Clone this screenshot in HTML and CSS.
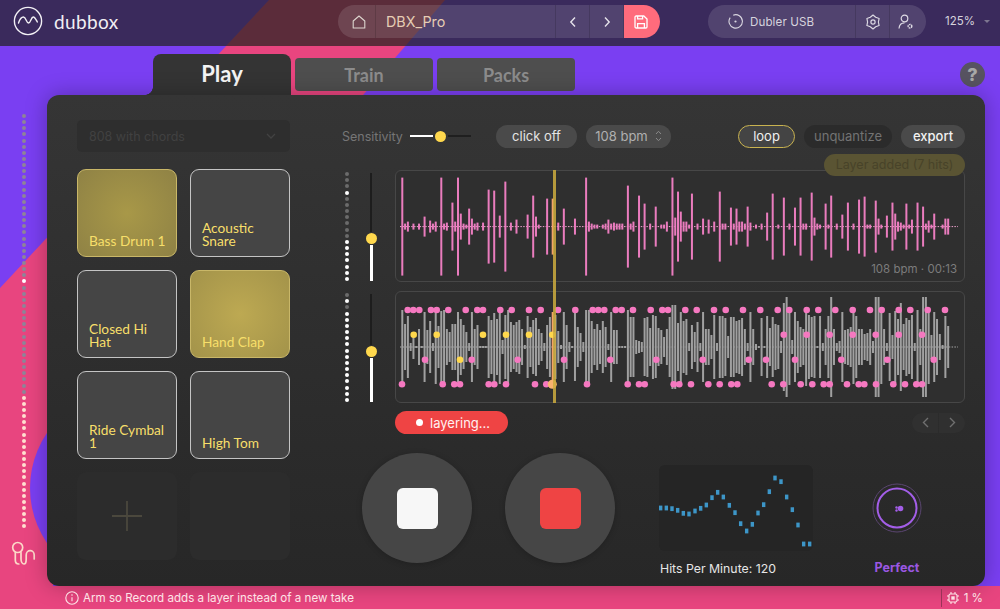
FILE: index.html
```html
<!DOCTYPE html>
<html lang="en">
<head>
    <meta charset="UTF-8">
    <title>dubbox</title>
    <link rel="stylesheet" href="styles.css">
</head>

<body>
    <div class="app">
        <svg class="bg-art" width="1000" height="609" viewBox="0 0 1000 609">
            <polygon points="269,0 445,0 100,400 47,609 0,609 0,288" fill="#e8457f"/>
            <circle cx="127.5" cy="488" r="97.5" fill="#7a3ff2"/>
            <rect x="0" y="586" width="1000" height="23" fill="#e8457f"/>
        </svg>

        <header class="topbar">
            <div class="brand">
                <svg width="30" height="30" viewBox="0 0 30 30" fill="none" stroke="#f2f0f5" stroke-width="1.4">
                    <circle cx="15" cy="15" r="13.6"/>
                    <path d="M5.5 17c1.5-4.5 3.4-6 5-6 2.6 0 2.8 6 5 6 2.4 0 2.4-6 4.8-6 1.6 0 2.6 2.4 4 5" stroke-linecap="round"/>
                </svg>
                <span class="brand-name">dubbox</span>
            </div>

            <div class="pill project">
                <div class="seg seg-home">
                    <svg width="14" height="14" viewBox="0 0 14 14" fill="none" stroke="#ddd6cf" stroke-width="1.1">
                        <path d="M1.2 6L7 1l5.8 5v7H1.2z" stroke-linejoin="round"/>
                    </svg>
                </div>
                <div class="seg seg-title">DBX_Pro</div>
                <div class="seg seg-arrow">
                    <svg width="8" height="12" viewBox="0 0 8 12" fill="none" stroke="#e5e2ea" stroke-width="1.4"><path d="M6 1.5L1.8 6 6 10.5"/></svg>
                </div>
                <div class="seg seg-arrow">
                    <svg width="8" height="12" viewBox="0 0 8 12" fill="none" stroke="#e5e2ea" stroke-width="1.4"><path d="M2 1.5L6.2 6 2 10.5"/></svg>
                </div>
                <div class="seg seg-save">
                    <svg width="14" height="14" viewBox="0 0 14 14" fill="none" stroke="#fff" stroke-width="1.3">
                        <path d="M1 2.2C1 1.5 1.5 1 2.2 1h7.6L13 4v7.8c0 .7-.5 1.2-1.2 1.2H2.2C1.5 13 1 12.5 1 11.8z"/>
                        <path d="M3.6 13V8.6h6.8V13M3.6 1v2.8h5V1"/>
                    </svg>
                </div>
            </div>

            <div class="pill device">
                <div class="seg seg-device">
                    <svg width="15" height="15" viewBox="0 0 15 15" fill="none" stroke="#d9d6e0" stroke-width="1.1">
                        <path d="M2.2 3.6A6.7 6.7 0 1 0 5.2 1.2"/>
                        <circle cx="7.5" cy="7.5" r="1.1" fill="#d9d6e0" stroke="none"/>
                    </svg>
                    <span>Dubler USB</span>
                </div>
                <div class="seg seg-icon">
                    <svg width="16" height="16" viewBox="0 0 16 16" fill="none" stroke="#dcd9e3" stroke-width="1.2" stroke-linejoin="round">
                        <path d="M8 1l2.7 2.3 3.4 1.2-.7 3.500.7 3.500-3.400 1.200L8 15l-2.700-2.300-3.400-1.200.7-3.500-.7-3.500 3.400-1.200z"/>
                        <circle cx="8" cy="8" r="2.1"/>
                    </svg>
                </div>
                <div class="seg seg-icon">
                    <svg width="16" height="16" viewBox="0 0 16 16" fill="none" stroke="#dcd9e3" stroke-width="1.2">
                        <circle cx="6.5" cy="4.5" r="3.3"/>
                        <path d="M1 14.5c.3-3.4 2.400-5.600 5.500-5.600"/>
                        <circle cx="12" cy="12.2" r="1.8" stroke-width="1.5" stroke-dasharray="1.6 .6"/>
                    </svg>
                </div>
            </div>

            <div class="zoom">125%<span class="zoom-caret"></span></div>
        </header>

        <nav class="tabs">
            <div class="tab tab-play">Play</div>
            <div class="tab">Train</div>
            <div class="tab">Packs</div>
            <div class="help">?</div>
        </nav>

        <div class="work">
            <aside class="rail">
                <div class="meter meter-rail" data-count="68" data-on="27" data-warm-from="46"></div>
                <svg class="snake" width="25" height="27" viewBox="0 0 25 27" fill="none" stroke="#fcd9c8" stroke-width="1.7" stroke-linecap="round">
                    <circle cx="6.7" cy="6.5" r="5"/>
                    <path d="M4.3 11.300V19c0 2.500 1.500 4 3.500 4M10 11.500V18c0 3 1.500 5 3 5s2.200-2 2.200-5v-4c0-2.700 2-4.300 4-4.300s4 1.600 4 4.300v4"/>
                </svg>
            </aside>

            <main class="panel">
                <section class="kit">
                    <div class="kit-select">
                        <span>808 with chords</span>
                        <svg width="10" height="6" viewBox="0 0 10 6" fill="none" stroke="#424242" stroke-width="1.3"><path d="M1 1l4 4 4-4"/></svg>
                    </div>
                    <div class="pads">
                        <div class="pad pad-on pad-dim">Bass Drum 1</div>
                        <div class="pad">Acoustic Snare</div>
                        <div class="pad">Closed Hi Hat</div>
                        <div class="pad pad-on">Hand Clap</div>
                        <div class="pad">Ride Cymbal 1</div>
                        <div class="pad">High Tom</div>
                        <div class="pad pad-empty">
                            <svg width="30" height="30" viewBox="0 0 30 30" stroke="#4b483d" stroke-width="1.8"><path d="M15 0v30M0 15h30"/></svg>
                        </div>
                        <div class="pad pad-empty"></div>
                    </div>
                </section>

                <section class="editor">
                    <div class="controls">
                        <span class="sens-label">Sensitivity</span>
                        <div class="hslider">
                            <span class="hslider-on"></span>
                            <span class="knob"></span>
                            <span class="hslider-off"></span>
                        </div>
                        <button class="chip chip-click">click off</button>
                        <button class="chip chip-bpm">108 bpm
                            <svg width="7" height="12" viewBox="0 0 7 12" fill="none" stroke="#8a8a8a" stroke-width="1"><path d="M1 4l2.5-2.700L6 4M1 8l2.500 2.700L6 8"/></svg>
                        </button>
                        <button class="chip chip-loop">loop</button>
                        <button class="chip chip-off">unquantize</button>
                        <button class="chip chip-export">export</button>
                    </div>

                    <div class="tracks">
                        <div class="track">
                            <div class="meter" data-count="18" data-on="3,11,12,13,14,15,16,17"></div>
                            <div class="vslider vslider-a">
                                <span class="vslider-off"></span>
                                <span class="knob"></span>
                                <span class="vslider-on"></span>
                            </div>
                            <div class="wave">
                                <svg id="wavePink" width="570" height="112" viewBox="395 170 570 112"></svg>
                                <span class="wave-info">108 bpm · 00:13</span>
                            </div>
                        </div>
                        <div class="track">
                            <div class="meter" data-count="18" data-on="1,3,4,5,6,7,8,9,10,11,12,13,14,15,16,17"></div>
                            <div class="vslider vslider-b">
                                <span class="vslider-off"></span>
                                <span class="knob"></span>
                                <span class="vslider-on"></span>
                            </div>
                            <div class="wave">
                                <svg id="waveGrey" width="570" height="112" viewBox="395 291 570 112"></svg>
                            </div>
                        </div>
                        <span class="playhead"></span>
                        <div class="toast">Layer added (7 hits)</div>
                    </div>

                    <div class="status-row">
                        <div class="layering"><span class="layering-dot"></span>layering...</div>
                        <div class="pager">
                            <div class="pager-btn">
                                <svg width="7" height="11" viewBox="0 0 7 11" fill="none" stroke="#6f6f6f" stroke-width="1.4"><path d="M6 1L1.500 5.500 6 10"/></svg>
                            </div>
                            <div class="pager-btn">
                                <svg width="7" height="11" viewBox="0 0 7 11" fill="none" stroke="#6f6f6f" stroke-width="1.4"><path d="M1 1l4.500 4.500L1 10"/></svg>
                            </div>
                        </div>
                    </div>

                    <div class="transport">
                        <div class="round-btn"><span class="square square-stop"></span></div>
                        <div class="round-btn"><span class="square square-rec"></span></div>
                        <div class="hits">
                            <svg id="hitsChart" class="hits-chart" width="154" height="86" viewBox="0 0 154 86"></svg>
                            <div class="hits-label">Hits Per Minute: 120</div>
                        </div>
                        <div class="rating">
                            <svg width="50" height="50" viewBox="0 0 50 50" fill="none">
                                <circle cx="25" cy="25" r="24" stroke="#5a4570" stroke-width="1"/>
                                <circle cx="25" cy="25" r="19.5" stroke="#a35ee8" stroke-width="2"/>
                                <circle cx="28.5" cy="25.5" r="2.8" fill="#a35ee8"/>
                                <circle cx="24.5" cy="24.5" r="1.2" fill="#a35ee8"/>
                                <circle cx="24.5" cy="27.5" r="1.2" fill="#a35ee8"/>
                            </svg>
                            <div class="rating-label">Perfect</div>
                        </div>
                    </div>
                </section>
            </main>
        </div>

        <footer class="statusbar">
            <svg width="14" height="14" viewBox="0 0 14 14" fill="none" stroke="#fde3e6" stroke-width="1.1">
                <circle cx="7" cy="7" r="6.2"/>
                <path d="M7 6.2v4"/>
                <circle cx="7" cy="4" r=".8" fill="#fde3e6" stroke="none"/>
            </svg>
            <span class="hint">Arm so Record adds a layer instead of a new take</span>
            <span class="cpu">
                <svg width="12" height="12" viewBox="0 0 12 12" fill="none" stroke="#fde3e6" stroke-width="1.1">
                    <rect x="2" y="2" width="8" height="8" rx="1.5"/>
                    <rect x="4.3" y="4.3" width="3.4" height="3.4" fill="#fde3e6" stroke="none"/>
                    <path d="M4 0v2M8 0v2M4 10v2M8 10v2M0 4h2M0 8h2M10 4h2M10 8h2"/>
                </svg>
                1 %
            </span>
        </footer>
    </div>

    <script src="waves.js"></script>
</body>
</html>
```

FILE: styles.css
```css
* {
    box-sizing: border-box;
}

body {
    margin: 0;
    background-color: #7a3ff2;
    font-family: "Inter", "Liberation Sans", sans-serif;
}

.app {
    position: relative;
    width: 1000px;
    height: 609px;
    overflow: hidden;
    display: flex;
    flex-direction: column;
    background-color: #7a3ff2;
}

.bg-art {
    position: absolute;
    top: 0;
    left: 0;
}

/* top bar */

.topbar {
    position: relative;
    display: flex;
    align-items: flex-start;
    height: 46px;
    padding-top: 5px;
    background-color: rgba(31, 34, 28, 0.7);
}

.brand {
    display: flex;
    align-items: center;
    width: 338px;
    height: 32px;
    padding-left: 13px;
}

.brand-name {
    margin-left: 11px;
    color: #f0eef3;
    font-family: "Lato", sans-serif;
    font-size: 19px;
    letter-spacing: 0.4px;
}

.pill {
    display: flex;
    height: 33px;
    border-radius: 17px;
    overflow: hidden;
}

.seg {
    display: flex;
    align-items: center;
    justify-content: center;
    background-color: rgba(255, 255, 255, 0.12);
    border-right: 1px solid rgba(0, 0, 0, 0.14);
}

.project {
    width: 322px;
}

.seg-home {
    width: 38px;
    padding-left: 4px;
}

.seg-title {
    justify-content: flex-start;
    width: 180px;
    padding-left: 10px;
    color: #e6cdb4;
    font-size: 14.3px;
}

.seg-arrow {
    width: 34px;
}

.seg-save {
    width: 36px;
    padding-right: 2px;
    background-color: #ff6b7c;
    border-right: none;
}

.device {
    width: 218px;
    margin-left: 48px;
}

.seg-device {
    justify-content: flex-start;
    gap: 7px;
    width: 148px;
    padding-left: 20px;
    color: #d6d3dd;
    font-size: 11.6px;
    letter-spacing: 0.1px;
}

.seg-icon {
    width: 34px;
}

.seg-icon:last-child {
    width: 36px;
    padding-right: 4px;
    border-right: none;
}

.zoom {
    display: flex;
    align-items: center;
    height: 32px;
    margin-left: 19px;
    color: #d6d3dd;
    font-size: 11.5px;
}

.zoom-caret {
    margin-left: 9px;
    border-left: 3px solid transparent;
    border-right: 3px solid transparent;
    border-top: 3px solid #7d7690;
}

/* tabs */

.tabs {
    position: relative;
    display: flex;
    align-items: flex-start;
    gap: 4px;
    height: 49px;
    padding: 12px 15px 0 153px;
}

.tab {
    display: flex;
    align-items: center;
    justify-content: center;
    width: 138px;
    height: 33px;
    border-radius: 4px;
    background-color: #4e4e4e;
    color: #8c8c8c;
    font-family: "Lato", sans-serif;
    font-size: 18px;
    font-weight: 700;
}

.tab-play {
    position: relative;
    height: 41px;
    margin-top: -4px;
    padding-bottom: 3px;
    border-radius: 8px 8px 0 0;
    background-color: #343434;
    color: #f4f4f4;
    font-size: 22px;
}

.tab-play::before {
    content: "";
    position: absolute;
    left: -8px;
    bottom: 0;
    width: 8px;
    height: 8px;
    background: radial-gradient(circle at 0 0, transparent 7.5px, #343434 8px);
}

.help {
    display: flex;
    align-items: center;
    justify-content: center;
    width: 25px;
    height: 25px;
    margin-top: 4px;
    margin-left: auto;
    border-radius: 50%;
    background-color: #575361;
    color: #a8a8a8;
    font-size: 18px;
    font-weight: 800;
}

/* main area */

.work {
    position: relative;
    display: flex;
    height: 491px;
}

.rail {
    display: flex;
    flex-direction: column;
    align-items: center;
    width: 47px;
    padding-top: 19px;
}

.snake {
    margin-top: 12px;
    margin-left: -1px;
}

.meter {
    display: flex;
    flex-direction: column;
    align-items: center;
    justify-content: space-between;
    width: 11px;
    padding: 2px 0 1px;
}

.meter span {
    width: 4px;
    height: 4px;
    border-radius: 50%;
    background-color: #6b6b6b;
}

.meter span.on {
    background-color: #ffffff;
}

.meter-rail {
    height: 415px;
    padding: 0;
    flex-shrink: 0;
}

.meter-rail span {
    background-color: #8e8498;
}

.meter-rail span.warm {
    background-color: #ffe0d0;
}

.panel {
    display: flex;
    width: 938px;
    padding: 25px 20px 0 30px;
    border-radius: 12px;
    background: linear-gradient(#353535, #272727);
    box-shadow: 0 0 22px rgba(0, 0, 0, 0.28);
}

.kit {
    width: 213px;
}

.kit-select {
    display: flex;
    align-items: center;
    justify-content: space-between;
    height: 32px;
    padding: 0 14px 0 12px;
    border-radius: 5px;
    background-color: #2e2e2e;
    color: #414141;
    font-size: 12.5px;
}

.pads {
    display: grid;
    grid-template-columns: 100px 100px;
    grid-auto-rows: 88px;
    gap: 13px;
    margin-top: 17px;
}

.pad {
    display: flex;
    align-items: flex-end;
    padding: 0 5px 9px 11px;
    border: 1.5px solid #c4c4c4;
    border-radius: 9px;
    background-color: #454545;
    color: #f7df6a;
    font-family: "Lato", sans-serif;
    font-size: 13.7px;
    line-height: 13px;
}

.pad-on {
    border-color: #c9b768;
    background: radial-gradient(circle, #bda952, #a3934a);
}

.pad-dim {
    background: radial-gradient(circle, #a89848, #8f8245);
}

.pad-empty {
    align-items: center;
    justify-content: center;
    padding: 0;
    border: none;
    background-color: #2c2c2c;
}

.editor {
    display: flex;
    flex-direction: column;
    flex: 1;
    margin-left: 51px;
    padding-top: 4.5px;
}

.controls {
    display: flex;
    align-items: center;
    height: 23px;
}

.sens-label {
    width: 68px;
    margin-left: 1px;
    color: #767676;
    font-size: 12.5px;
}

.hslider {
    display: flex;
    align-items: center;
    width: 61px;
}

.hslider-on {
    width: 23px;
    height: 2px;
    background-color: #ffffff;
}

.hslider-off {
    flex: 1;
    height: 2px;
    margin-left: 2px;
    background-color: #1f1f1f;
}

.hslider .knob {
    margin-left: 2px;
}

.knob {
    display: block;
    flex-shrink: 0;
    width: 11px;
    height: 11px;
    border-radius: 50%;
    background-color: #ffd84d;
}

.chip {
    display: flex;
    align-items: center;
    justify-content: center;
    height: 23px;
    padding: 0;
    border: none;
    border-radius: 12px;
    background-color: #4a4a4a;
    color: #e4e4e4;
    font-family: inherit;
    font-size: 13px;
}

.chip-click {
    width: 81px;
    margin-left: 25px;
}

.chip-bpm {
    gap: 7px;
    width: 85px;
    margin-left: 9px;
    color: #b0b0b0;
}

.chip-loop {
    width: 57px;
    margin-left: auto;
    border: 1.5px solid #c9b350;
    background-color: #444444;
    color: #f0f0f0;
}

.chip-off {
    width: 88px;
    margin-left: 9px;
    background-color: #2b2b2b;
    color: #737373;
}

.chip-export {
    width: 64px;
    margin-left: 9px;
    color: #f2f2f2;
    font-weight: 500;
}

.tracks {
    position: relative;
    display: flex;
    flex-direction: column;
    gap: 9px;
    margin-top: 22.5px;
}

.track {
    display: flex;
    height: 112px;
}

.vslider {
    display: flex;
    flex-direction: column;
    align-items: center;
    width: 12px;
    margin: 3px 18px 1px 13px;
}

.vslider-off {
    flex: 1;
    width: 2px;
    margin-bottom: 1px;
    background-color: #1d1d1d;
}

.vslider-on {
    width: 3px;
    margin-top: 1px;
    background-color: #ffffff;
}

.vslider-a .vslider-on {
    height: 36px;
}

.vslider-b .vslider-on {
    height: 44px;
}

.wave {
    position: relative;
    width: 570px;
    height: 112px;
    border: 1px solid #474747;
    border-radius: 6px;
    background-color: #2f2f2f;
    overflow: hidden;
}

.wave svg {
    display: block;
    margin: -1px;
}

.wave-info {
    position: absolute;
    right: 7px;
    bottom: 5px;
    color: #7c7c7c;
    font-size: 11.5px;
}

.playhead {
    position: absolute;
    top: 0;
    bottom: 0;
    left: 212px;
    width: 2.5px;
    background-color: rgba(204, 172, 62, 0.85);
}

.toast {
    position: absolute;
    top: -16px;
    right: 0;
    width: 141px;
    height: 22px;
    border-radius: 11px;
    background-color: #5a5433;
    color: #484329;
    font-size: 12.5px;
    line-height: 22px;
    text-align: center;
    white-space: nowrap;
}

.status-row {
    display: flex;
    align-items: center;
    justify-content: space-between;
    height: 23px;
    margin-top: 8px;
    margin-left: 54px;
}

.layering {
    display: flex;
    align-items: center;
    width: 113px;
    height: 23px;
    padding-left: 21px;
    border-radius: 12px;
    background-color: #ef4444;
    color: #fff1f1;
    font-size: 13px;
}

.layering-dot {
    width: 7px;
    height: 7px;
    margin-right: 7px;
    border-radius: 50%;
    background-color: #ffffff;
}

.pager {
    display: flex;
    gap: 1px;
}

.pager-btn {
    display: flex;
    align-items: center;
    justify-content: center;
    width: 26px;
    height: 20px;
    background-color: #303030;
}

.pager-btn:first-child {
    border-radius: 10px 0 0 10px;
}

.pager-btn:last-child {
    border-radius: 0 10px 10px 0;
}

.transport {
    display: flex;
    align-items: flex-start;
    margin-top: 19px;
    margin-left: 21px;
}

.round-btn {
    display: flex;
    align-items: center;
    justify-content: center;
    width: 110px;
    height: 110px;
    margin-right: 33px;
    border-radius: 50%;
    background-color: #464646;
    box-shadow: 0 1px 6px rgba(0, 0, 0, 0.2);
}

.square {
    display: block;
    width: 41px;
    height: 41px;
    border-radius: 6px;
}

.square-stop {
    background-color: #f7f7f7;
}

.square-rec {
    background-color: #ef4444;
}

.hits {
    width: 154px;
    margin-top: 12px;
    margin-left: 11px;
}

.hits-chart {
    display: block;
    border-radius: 6px;
    background-color: #252525;
}

.hits-label {
    margin-top: 10px;
    margin-left: 1px;
    color: #e6e6e6;
    font-size: 12.3px;
    font-weight: 400;
    white-space: nowrap;
}

.rating {
    display: flex;
    flex-direction: column;
    align-items: center;
    width: 100px;
    margin-top: 30px;
    margin-left: 34px;
}

.rating-label {
    margin-top: 27px;
    color: #9b57e2;
    font-size: 12.5px;
    font-weight: 700;
}

/* bottom */

.statusbar {
    position: relative;
    display: flex;
    align-items: center;
    height: 23px;
    padding-left: 65px;
    color: #fde3e6;
    font-size: 11.6px;
}

.hint {
    margin-left: 4px;
}

.cpu {
    display: flex;
    align-items: center;
    gap: 5px;
    height: 18px;
    margin-left: auto;
    margin-right: 17px;
    padding-left: 5px;
    border-left: 1px solid #9a3358;
}
```

FILE: waves.js
```js
// level dots
document.querySelectorAll('.meter').forEach(function (meter) {
    const on = (meter.dataset.on || '').split(',').map(Number);
    const warmFrom = meter.dataset.warmFrom ? Number(meter.dataset.warmFrom) : Infinity;
    for (let i = 0; i < Number(meter.dataset.count); i++) {
        const dot = document.createElement('span');
        if (on.includes(i)) dot.className = 'on';
        if (i >= warmFrom) dot.className = 'warm';
        meter.appendChild(dot);
    }
});

const SVG_NS = 'http://www.w3.org/2000/svg';

function add(svg, tag, attrs) {
    const el = document.createElementNS(SVG_NS, tag);
    Object.keys(attrs).forEach(function (k) { el.setAttribute(k, attrs[k]); });
    svg.appendChild(el);
}

const BAR_X = 402.3;
const BAR_STEP = 2.785;

function drawWave(svg, bars, centerY, lineColor, barColor) {
    add(svg, 'line', {
        x1: 400, x2: 958, y1: centerY, y2: centerY,
        stroke: lineColor, 'stroke-width': 1, 'stroke-dasharray': '1.5 1.3'
    });
    Object.keys(bars).forEach(function (i) {
        const half = bars[i];
        add(svg, 'rect', {
            x: BAR_X + i * BAR_STEP - 1,
            y: centerY - half,
            width: 2,
            height: half * 2,
            fill: i == 54 ? '#f2a36a' : barColor
        });
    });
}

function drawDots(svg, xs, y, fill, r) {
    xs.forEach(function (x) {
        add(svg, 'circle', { cx: x, cy: y, r: r || 3.3, fill: fill });
    });
}

// take 1: index -> half height
const pinkBars = {
    0: 49, 1: 3, 2: 5, 4: 3, 6: 3, 8: 10, 10: 6, 11: 3, 12: 5, 14: 49, 15: 3, 16: 4, 18: 24, 19: 5, 20: 49,
    21: 13, 22: 3, 23: 2, 24: 18, 25: 8, 26: 3, 27: 4, 29: 4, 31: 37, 33: 36, 35: 11, 37: 45, 39: 4, 41: 7,
    45: 12, 47: 31, 48: 10, 49: 2, 52: 28, 54: 28, 56: 4, 58: 18, 62: 8, 66: 49, 67: 5, 68: 3, 69: 2, 70: 2,
    72: 2, 73: 3, 74: 7, 75: 3, 76: 4, 77: 3, 78: 3, 79: 3, 81: 41, 82: 3, 83: 5, 85: 31, 87: 23, 89: 3,
    91: 20, 93: 2, 94: 2, 95: 5, 97: 49, 98: 9, 99: 35, 100: 15, 101: 5, 102: 5, 103: 2, 104: 33, 106: 3,
    108: 8, 110: 7, 112: 5, 114: 35, 115: 3, 116: 3, 118: 19, 119: 3, 120: 18, 121: 5, 122: 5, 123: 3, 124: 20,
    125: 4, 127: 2, 129: 3, 131: 14, 133: 33, 135: 2, 137: 29, 139: 3, 141: 19, 143: 29, 144: 3, 145: 3,
    147: 34, 148: 9, 149: 3, 150: 2, 152: 23, 153: 2, 154: 31, 156: 3, 158: 12, 160: 24, 162: 3, 164: 27,
    166: 30, 167: 2, 168: 2, 170: 26, 171: 8, 172: 2, 174: 11, 176: 24, 177: 13, 178: 5, 179: 4, 180: 2,
    181: 23, 182: 2, 183: 7, 185: 24, 187: 20, 188: 3, 189: 6, 190: 2, 191: 13, 194: 2, 195: 8, 196: 8
};

// take 2
const greyBars = [
    37, 23, 31, 4, 12, 1, 18, 1, 35, 17, 26, 4, 37, 21, 36, 37, 18, 15, 23, 23, 35, 28, 22, 15, 4, 35, 18, 22, 1, 1,
    1, 31, 27, 34, 28, 37, 7, 32, 37, 25, 22, 25, 27, 18, 2, 31, 20, 27, 29, 18, 14, 4, 22, 30, 35, 32, 16, 2, 35, 22,
    5, 1, 34, 20, 14, 5, 37, 37, 26, 18, 23, 17, 26, 20, 3, 35, 17, 17, 1, 1, 1, 37, 30, 30, 7, 6, 5, 29, 30, 19,
    32, 31, 19, 17, 10, 18, 30, 42, 42, 24, 35, 26, 28, 4, 22, 15, 25, 4, 35, 18, 18, 12, 32, 4, 31, 31, 29, 11, 30, 30,
    26, 27, 29, 18, 4, 35, 18, 3, 1, 29, 1, 31, 19, 30, 23, 22, 6, 44, 50, 38, 7, 35, 26, 20, 18, 39, 32, 30, 31, 1,
    31, 4, 18, 31, 50, 18, 4, 6, 35, 17, 18, 20, 37, 31, 18, 18, 13, 14, 18, 6, 50, 50, 37, 18, 4, 34, 12, 36, 28, 44,
    23, 29, 27, 32, 4, 37, 18, 50, 50, 37, 12, 35, 28, 13, 2, 31, 21
];

drawWave(document.getElementById('wavePink'), pinkBars, 226.6, '#efa3cf', '#ea7cbe');

const grey = document.getElementById('waveGrey');
drawWave(grey, Object.assign({}, greyBars), 347, '#a8a8a8', '#a0a0a0');

const PINK = '#f578c0';
const YELLOW = '#ffd84d';

drawDots(grey, [407.7, 413.3, 419.3, 431, 436.7, 448.3, 465.7, 477.3, 483, 500.3, 511.7, 529, 540.7, 558, 575.3,
    592.7, 598.3, 604.3, 615.7, 621.7, 633, 650.7, 662.3, 668, 685.3, 696.7, 714, 725.7, 743, 760.3, 777.7, 789.3,
    806.7, 818.3, 835.3, 852.7, 870, 881.7, 898.7, 910.3, 927.7, 945], 310, PINK);
drawDots(grey, [413.7, 436.7, 483, 506, 529, 552.3], 334.7, YELLOW);
drawDots(grey, [783.7, 806.7, 829.7, 852.7, 875.7, 898.7, 922], 334.7, PINK);
drawDots(grey, [425, 471.7, 517.7, 564, 610.3, 656.3, 702.7, 748.7, 766, 795, 841.3, 887.3, 933.7], 359.7, PINK);
drawDots(grey, [460], 359.7, YELLOW);
drawDots(grey, [402, 442.7, 454.3, 460, 488.7, 494.3, 506, 535, 546.3, 587, 627.7, 639, 644.7, 673.7, 679.3, 691,
    708.3, 719.7, 731.3, 737.3, 771.7, 783.3, 800.7, 812.3, 823.7, 829.7, 847, 858.7, 864.3, 876, 893.3, 905, 916.3,
    922], 384.3, PINK);
drawDots(grey, [552.3], 384.3, '#f9b36f', 4.5);

// hits per minute
const hits = [
    [62, 174], [79, 174], [96, 176], [113, 181], [130, 190], [147, 192], [165, 183], [182, 175], [199, 165],
    [216, 143], [233, 127], [250, 141], [268, 166], [285, 188], [302, 221], [320, 243], [337, 223], [354, 189],
    [371, 164], [388, 125], [405, 84], [423, 95], [440, 141], [457, 179], [474, 225], [491, 282], [509, 282]
];
const chart = document.getElementById('hitsChart');
hits.forEach(function (p) {
    // values read at 3x, chart origin 659,465
    add(chart, 'rect', {
        x: 640 + p[0] / 3 - 659 - 1.7,
        y: 450 + p[1] / 3 - 465 - 2.4,
        width: 3.4,
        height: 4.8,
        fill: '#3d96c8'
    });
});
```
